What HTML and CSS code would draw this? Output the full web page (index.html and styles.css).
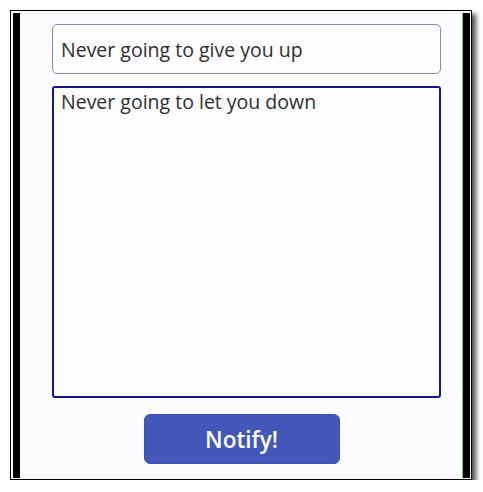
FILE: index.html
```html
<!DOCTYPE html>
<html>
<head>
<meta charset="utf-8">
<link rel="stylesheet" href="styles.css">
</head>
<body>
<div class="frame">
  <div class="bar bar-left"></div>
  <div class="content">
    <div class="field">Never going to give you up</div>
    <div class="area">Never going to let you down</div>
    <div class="actions"><button class="notify">Notify!</button></div>
  </div>
  <div class="edge"></div>
  <div class="bar bar-right"></div>
</div>
</body>
</html>
```
FILE: styles.css
```css
html, body {
  margin: 0;
  padding: 0;
  background: #ffffff;
}
body {
  padding: 10px 0 0 10px;
  font-family: "Open Sans", "Noto Sans", sans-serif;
}
.frame {
  box-sizing: border-box;
  width: 462px;
  height: 470px;
  border: 1px solid #000;
  background: #fcfcfe;
  box-shadow: 4px 4px 5px rgba(0, 0, 0, 0.7);
  display: flex;
  padding: 2px 1px 1px 1px;
}
.bar {
  width: 7px;
  background: #000;
  flex: none;
}
.bar-left {
  margin-left: 1px;
}
.edge {
  width: 1px;
  background: #7cc36a;
  flex: none;
}
.content {
  flex: 1;
  display: flex;
  flex-direction: column;
  padding: 11px 21px 0 32px;
}
.field {
  box-sizing: border-box;
  height: 50px;
  border: 1px solid #8a86b2;
  border-radius: 5px;
  padding: 0 8px;
  display: flex;
  align-items: center;
  font-size: 19.5px;
  color: #2e2e2e;
  background: #fdfdff;
}
.area {
  box-sizing: border-box;
  height: 312px;
  margin-top: 12px;
  border: 2px solid #151584;
  border-radius: 3px;
  padding: 2px 7px 0;
  font-size: 19.5px;
  line-height: 24px;
  color: #2e2e2e;
  background: #fdfdff;
}
.actions {
  display: flex;
  justify-content: center;
  margin-top: 16px;
  padding-right: 10px;
}
.notify {
  width: 196px;
  height: 50px;
  border: 1px solid #3a4fae;
  border-radius: 6px;
  background: #4357b9;
  color: #ffffff;
  font-family: "Open Sans", sans-serif;
  font-weight: 600;
  font-size: 22.5px;
  padding: 0;
}
```
